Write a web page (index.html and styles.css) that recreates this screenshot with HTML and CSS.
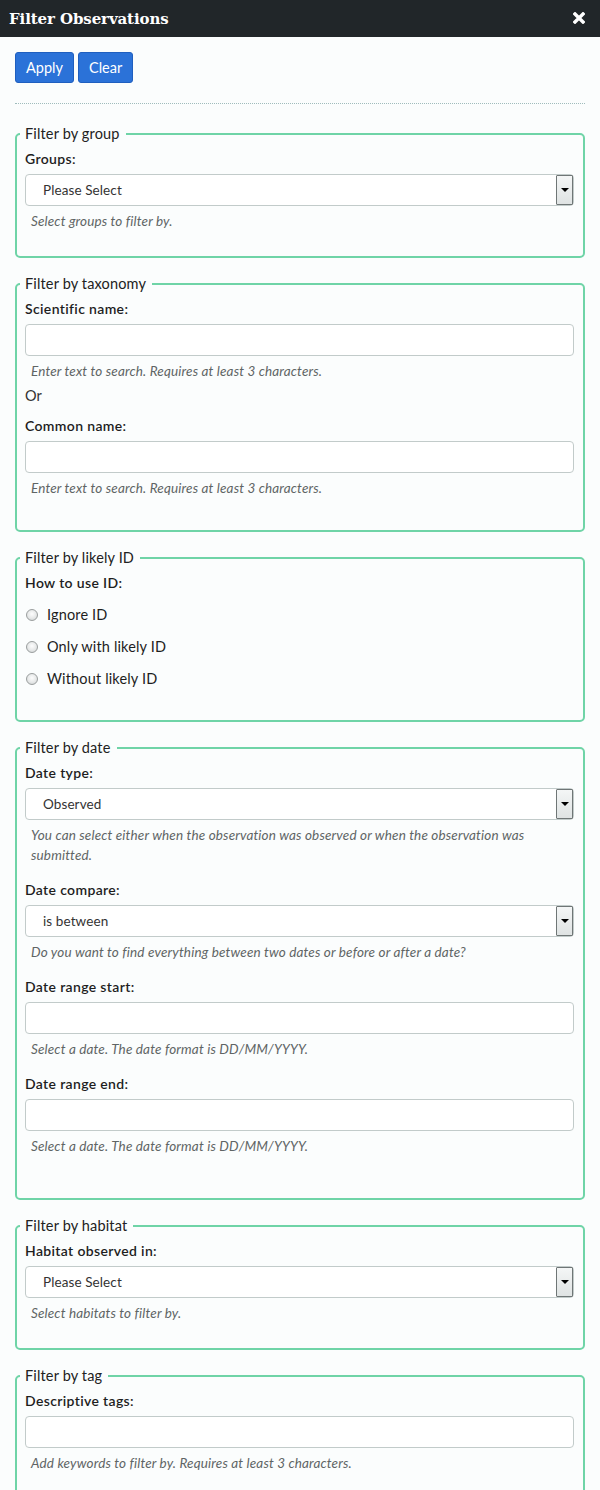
FILE: index.html
```html
<!DOCTYPE html>
<html lang="en">
<head>
<meta charset="utf-8">
<title>Filter Observations</title>
<link rel="stylesheet" href="styles.css">
</head>
<body>
<header class="topbar">
  <h1 class="topbar-title">Filter Observations</h1>
  <button class="close" type="button" aria-label="Close">
    <svg width="12" height="12" viewBox="0 0 12 12"><path d="M2 2 L10 10 M10 2 L2 10" stroke="#fff" stroke-width="3.4" stroke-linecap="square" fill="none"/></svg>
  </button>
</header>
<main class="panel">
  <div class="actions">
    <button class="btn" type="button">Apply</button>
    <button class="btn" type="button">Clear</button>
  </div>
  <hr class="divider">

  <fieldset class="box">
    <legend class="box-legend">Filter by group</legend>
    <div class="group">
      <label class="lbl">Groups:</label>
      <div class="select"><span class="select-value">Please Select</span><span class="select-arrow"></span></div>
      <p class="help">Select groups to filter by.</p>
    </div>
  </fieldset>

  <fieldset class="box pb-17">
    <legend class="box-legend">Filter by taxonomy</legend>
    <div class="group tight">
      <label class="lbl">Scientific name:</label>
      <div class="input"></div>
      <p class="help">Enter text to search. Requires at least 3 characters.</p>
    </div>
    <p class="or">Or</p>
    <div class="group">
      <label class="lbl">Common name:</label>
      <div class="input"></div>
      <p class="help">Enter text to search. Requires at least 3 characters.</p>
    </div>
  </fieldset>

  <fieldset class="box pb-16">
    <legend class="box-legend">Filter by likely ID</legend>
    <div class="group">
      <label class="lbl">How to use ID:</label>
      <div class="radios">
        <label class="radio"><span class="radio-dot"></span>Ignore ID</label>
        <label class="radio"><span class="radio-dot"></span>Only with likely ID</label>
        <label class="radio"><span class="radio-dot"></span>Without likely ID</label>
      </div>
    </div>
  </fieldset>

  <fieldset class="box pb-27">
    <legend class="box-legend">Filter by date</legend>
    <div class="group">
      <label class="lbl">Date type:</label>
      <div class="select"><span class="select-value">Observed</span><span class="select-arrow"></span></div>
      <p class="help">You can select either when the observation was observed or when the observation was submitted.</p>
    </div>
    <div class="group">
      <label class="lbl">Date compare:</label>
      <div class="select"><span class="select-value">is between</span><span class="select-arrow"></span></div>
      <p class="help">Do you want to find everything between two dates or before or after a date?</p>
    </div>
    <div class="group">
      <label class="lbl">Date range start:</label>
      <div class="input"></div>
      <p class="help">Select a date. The date format is DD/MM/YYYY.</p>
    </div>
    <div class="group">
      <label class="lbl">Date range end:</label>
      <div class="input"></div>
      <p class="help">Select a date. The date format is DD/MM/YYYY.</p>
    </div>
  </fieldset>

  <fieldset class="box">
    <legend class="box-legend">Filter by habitat</legend>
    <div class="group">
      <label class="lbl">Habitat observed in:</label>
      <div class="select"><span class="select-value">Please Select</span><span class="select-arrow"></span></div>
      <p class="help">Select habitats to filter by.</p>
    </div>
  </fieldset>

  <fieldset class="box">
    <legend class="box-legend">Filter by tag</legend>
    <div class="group">
      <label class="lbl">Descriptive tags:</label>
      <div class="input"></div>
      <p class="help">Add keywords to filter by. Requires at least 3 characters.</p>
    </div>
  </fieldset>
</main>
</body>
</html>
```

FILE: styles.css
```css
html, body {
  margin: 0;
  padding: 0;
}
body {
  background: #fbfdfd;
  font-family: Lato, "Open Sans", sans-serif;
  font-size: 14px;
  color: #222;
}
.topbar {
  height: 37px;
  background: #212629;
  display: flex;
  align-items: center;
  justify-content: space-between;
  padding: 0 15px 0 9px;
}
.topbar-title {
  margin: 0;
  font-family: "DejaVu Serif", serif;
  font-weight: bold;
  font-size: 15px;
  color: #fff;
  letter-spacing: -0.1px;
}
.close {
  border: 0;
  background: none;
  padding: 0;
  width: 12px;
  height: 12px;
  display: flex;
  margin-top: -2px;
}
.panel {
  padding: 15px 15px 0 15px;
}
.actions {
  display: flex;
  gap: 4px;
}
.btn {
  font-family: Lato, sans-serif;
  font-size: 14.5px;
  color: #fff;
  background: #2b72d8;
  border: 1px solid #1f5fbf;
  border-radius: 3px;
  height: 31px;
  padding: 0 10px;
}
.divider {
  border: 0;
  border-top: 1px dotted #9fbcbc;
  margin: 20px 0 20px 0;
}
.box {
  margin: 0 0 16px 0;
  border: 2px solid #6fd4a7;
  border-radius: 5px;
  padding: 5px 9px 10px 8px;
  min-width: 0;
}
.box.pb-16 { padding-bottom: 16px; }
.box.pb-17 { padding-bottom: 17px; }
.box.pb-27 { padding-bottom: 27px; }
.box-legend {
  padding: 0 6px 0 5px;
  margin-left: -5px;
  font-size: 14.5px;
  letter-spacing: 0.15px;
  line-height: 20px;
  color: #222;
}
.group {
  margin-bottom: 15px;
}
.group.tight {
  margin-bottom: 5px;
}
.lbl {
  display: block;
  font-weight: 600;
  font-size: 14px;
  letter-spacing: 0.35px;
  line-height: 20px;
  margin-bottom: 5px;
  color: #1e1e1e;
}
.select {
  display: flex;
  height: 32px;
  box-sizing: border-box;
  border: 1px solid #c2cbca;
  border-radius: 4px;
  background: #fff;
  align-items: stretch;
}
.select-value {
  flex: 1;
  display: flex;
  align-items: center;
  padding-left: 17px;
  font-size: 13.5px;
  letter-spacing: 0.1px;
  color: #333;
}
.select-arrow {
  width: 17px;
  box-sizing: border-box;
  border: 1px solid #6f7676;
  border-radius: 1px;
  background: linear-gradient(#f4f6f6, #dfe3e3);
  display: flex;
  align-items: center;
  justify-content: center;
}
.select-arrow::after {
  content: "";
  width: 0;
  height: 0;
  border-left: 4px solid transparent;
  border-right: 4px solid transparent;
  border-top: 4px solid #000;
}
.input {
  height: 32px;
  box-sizing: border-box;
  border: 1px solid #c2cbca;
  border-radius: 4px;
  background: #fff;
}
.help {
  margin: 5px 0 0 0;
  padding-left: 6px;
  font-size: 13.5px;
  letter-spacing: 0.15px;
  line-height: 20px;
  font-style: italic;
  color: #5f6565;
}
.or {
  margin: 0 0 10px 0;
  line-height: 20px;
  font-size: 14.5px;
  color: #333;
}
.radios {
  display: flex;
  flex-direction: column;
  gap: 12px;
  margin-top: 12px;
}
.radio {
  display: flex;
  align-items: center;
  gap: 9px;
  line-height: 20px;
  font-size: 14.5px;
  letter-spacing: 0.15px;
  color: #1e1e1e;
  padding-left: 1px;
}
.radio-dot {
  width: 10px;
  height: 10px;
  border-radius: 50%;
  border: 1px solid #9a9e9e;
  background: radial-gradient(circle at 50% 40%, #fdfdfd 0, #e6e8e8 55%, #c9cccc 100%);
}
```
